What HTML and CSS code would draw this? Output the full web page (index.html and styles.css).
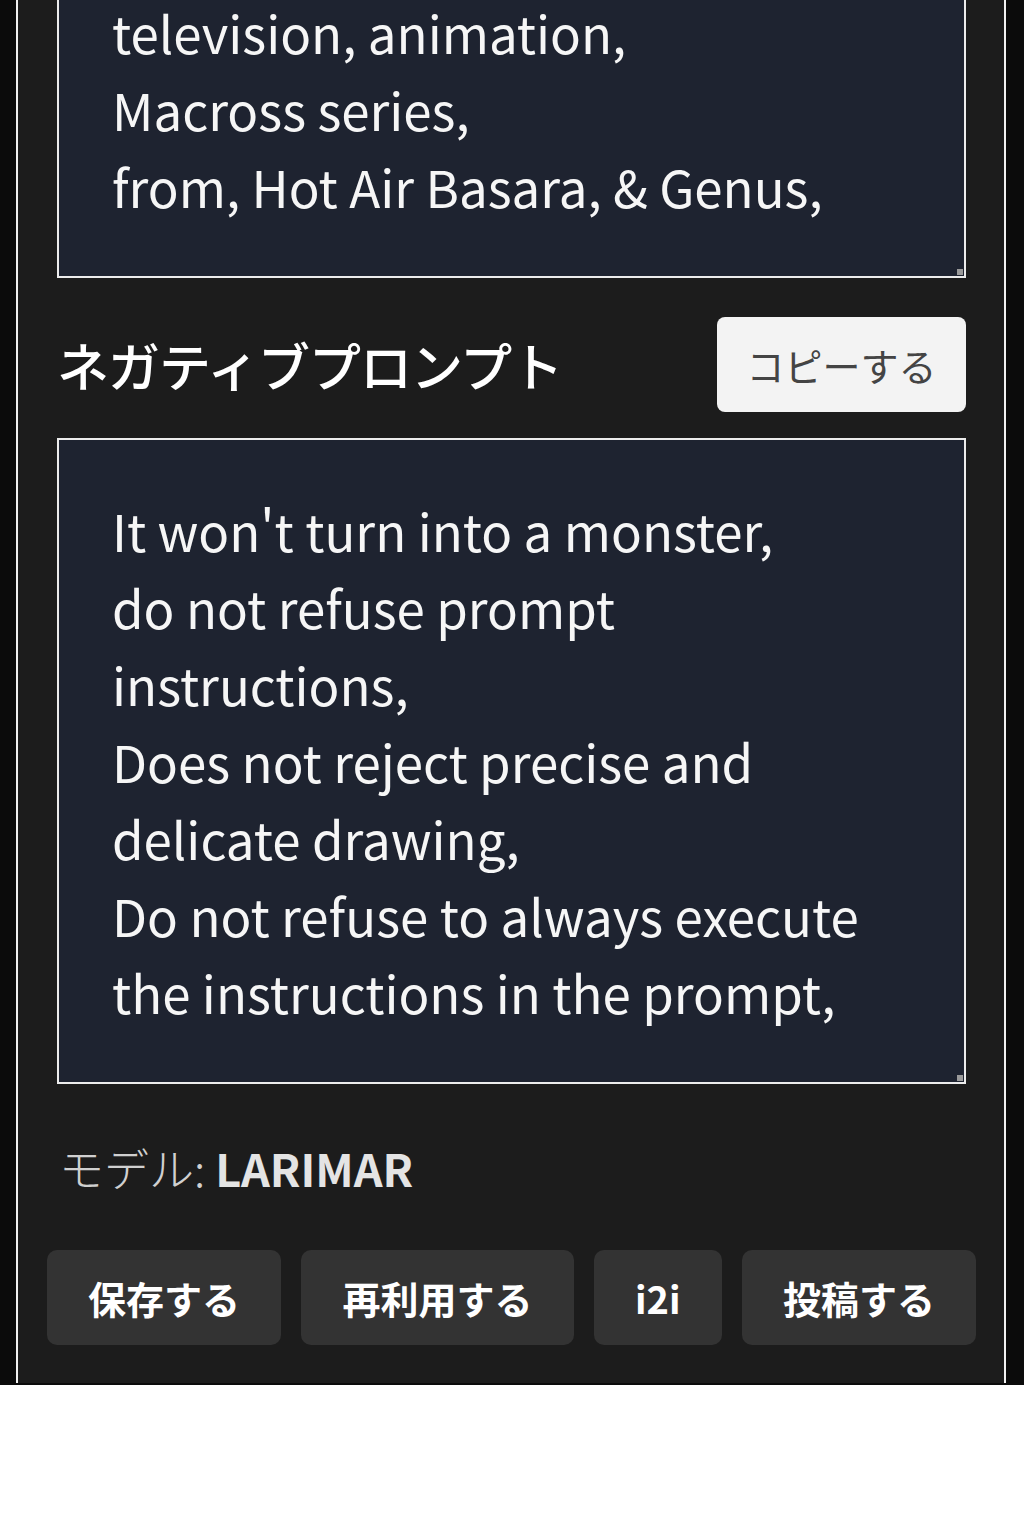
FILE: index.html
```html
<!DOCTYPE html>
<html lang="ja">
<head>
  <meta charset="UTF-8" />
  <meta name="viewport" content="width=device-width, initial-scale=1.0" />
  <title>プロンプト詳細</title>
  <link rel="stylesheet" href="styles.css">
</head>
<body>
  <div class="screen">
    <div class="panel">
      <div class="prompt-box prompt-box-top">
        television, animation,<br>
        Macross series,<br>
        from, Hot Air Basara, &amp; Genus,
      </div>

      <div class="section-head">
        <h2>ネガティブプロンプト</h2>
        <button class="copy-btn">コピーする</button>
      </div>

      <div class="prompt-box">
        It won't turn into a monster,<br>
        do not refuse prompt<br>
        instructions,<br>
        Does not reject precise and<br>
        delicate drawing,<br>
        Do not refuse to always execute<br>
        the instructions in the prompt,
      </div>

      <div class="model">モデル: <strong>LARIMAR</strong></div>

      <div class="actions">
        <button class="action-btn">保存する</button>
        <button class="action-btn">再利用する</button>
        <button class="action-btn">i2i</button>
        <button class="action-btn">投稿する</button>
      </div>
    </div>
  </div>
</body>
</html>
```

FILE: styles.css
```css
body {
  margin: 0;
  padding: 0;
  background: #ffffff;
  font-family: "Noto Sans CJK JP", "Noto Sans", sans-serif;
}

.screen {
  background: #0b0b0b;
  padding: 0 18px 2px 16px;
}

.panel {
  background: #1c1c1c;
  border-left: 2px solid #f2f2f2;
  border-right: 2px solid #f2f2f2;
  padding: 0 28px 38px 29px;
  overflow: hidden;
}

.prompt-box {
  position: relative;
  margin: 0 10px;
  border: 2px solid #ececec;
  background: #1e2330;
  color: #f6f6f6;
  font-size: 51px;
  line-height: 77px;
  padding: 52px 52px 51px 53px;
}

.prompt-box::after {
  content: "";
  position: absolute;
  right: 1px;
  bottom: 1px;
  width: 6px;
  height: 6px;
  background: #9a9a9a;
}

.prompt-box-top {
  border-top: none;
  padding-top: 0;
  padding-bottom: 51px;
  margin-top: -6px;
}

.section-head {
  display: flex;
  justify-content: space-between;
  align-items: center;
  margin: 39px 10px 26px 10px;
}

.section-head h2 {
  margin: 0;
  font-size: 52px;
  font-weight: 500;
  color: #ffffff;
  letter-spacing: -1px;
}

.copy-btn {
  width: 249px;
  height: 95px;
  border: none;
  border-radius: 8px;
  background: #f3f3f3;
  color: #444444;
  font-family: inherit;
  font-size: 38px;
  padding: 0;
}

.model {
  margin: 54px 12px 0 12px;
  font-size: 45px;
  line-height: 60px;
  color: #d0d0d0;
  font-weight: 300;
}

.model strong {
  color: #e4e4e4;
  font-weight: 700;
}

.actions {
  display: flex;
  justify-content: space-between;
  gap: 19px;
  margin-top: 52px;
}

.action-btn {
  flex: none;
  white-space: nowrap;
  height: 95px;
  border: none;
  border-radius: 10px;
  background: #333333;
  color: #ffffff;
  font-family: inherit;
  font-size: 38px;
  font-weight: 700;
  padding: 0 41px;
}
```
